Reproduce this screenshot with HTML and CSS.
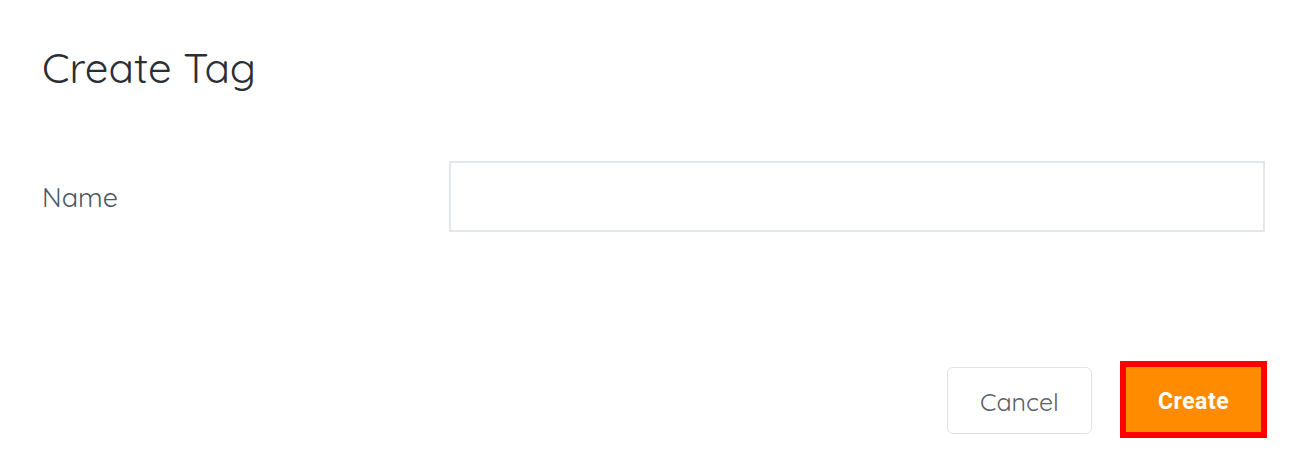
FILE: index.html
```html
<!DOCTYPE html>
<html>
<head>
    <title>Create Tag</title>
    <meta charset="utf-8">
    <link rel="stylesheet" href="styles.css">
</head>
<body>
    <div class="dialog">
        <h1 class="title">Create Tag</h1>
        <form id="tagForm" class="form">
            <div class="row">
                <label for="name" class="label">Name</label>
                <input type="text" id="name" class="field">
            </div>
            <div class="actions">
                <button type="button" class="btn btn-cancel">Cancel</button>
                <button type="submit" class="btn btn-create">Create</button>
            </div>
        </form>
    </div>
</body>
</html>
```

FILE: styles.css
```css
body {
    margin: 0;
    background: #fff;
    font-family: "Quicksand", "Lato", "Noto Sans", sans-serif;
}
.dialog {
    display: flex;
    flex-direction: column;
    padding: 39px 41px 0 42px;
}
.title {
    margin: 0;
    font-size: 42px;
    line-height: 58px;
    font-weight: 400;
    color: #2a2e35;
}
.form {
    display: flex;
    flex-direction: column;
}
.row {
    display: flex;
    align-items: center;
    margin-top: 64px;
}
.label {
    width: 407px;
    font-size: 27px;
    color: #4b5663;
}
.field {
    flex: 1;
    height: 71px;
    box-sizing: border-box;
    border: 2px solid #e1e7ea;
    border-radius: 0;
    outline: none;
    font-size: 20px;
}
.actions {
    display: flex;
    justify-content: flex-end;
    align-items: flex-end;
    gap: 28px;
    margin-top: 129px;
    margin-right: -2px;
}
.btn {
    box-sizing: border-box;
    cursor: pointer;
}
.btn-cancel {
    width: 145px;
    height: 67px;
    margin-bottom: 4px;
    padding-top: 3px;
    background: #fff;
    border: 1px solid #dfe3e8;
    border-radius: 6px;
    color: #5a616b;
    font-family: "Quicksand", "Lato", "Noto Sans", sans-serif;
    font-size: 25px;
}
.btn-create {
    width: 147px;
    height: 77px;
    padding-top: 4px;
    background: #ff8c00;
    border: 6px solid #ff0000;
    border-radius: 0;
    color: #fff;
    font-family: "Roboto", "Liberation Sans", sans-serif;
    font-weight: 700;
    font-size: 23px;
    letter-spacing: 0.5px;
}
```
